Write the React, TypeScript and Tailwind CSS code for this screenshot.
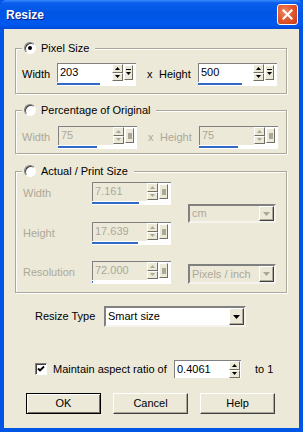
import React from "react";

function UpDown({ disabled }: { disabled?: boolean }) {
  const c = disabled ? "#ACA899" : "#000";
  return (
    <div className="flex flex-col w-[11px] h-[17px]">
      <div className="flex-1 flex items-center justify-center bg-[#ECE9D8] border border-t-white border-l-white border-b-[#716F64] border-r-[#716F64]">
        <svg width="5" height="3" viewBox="0 0 5 3"><path d="M2.5 0L5 3H0z" fill={c} /></svg>
      </div>
      <div className="flex-1 flex items-center justify-center bg-[#ECE9D8] border border-t-white border-l-white border-b-[#716F64] border-r-[#716F64]">
        <svg width="5" height="3" viewBox="0 0 5 3"><path d="M0 0H5L2.5 3z" fill={c} /></svg>
      </div>
    </div>
  );
}

function DropBtn({ disabled }: { disabled?: boolean }) {
  return (
    <div className="w-[9px] h-[15px] mt-[1px] ml-[1px] flex items-center justify-center bg-[#ECE9D8] border border-t-white border-l-white border-b-[#716F64] border-r-[#716F64]">
      {disabled ? (
        <div className="w-[4px] h-[6px] bg-[#ACA899]" />
      ) : (
        <svg width="5" height="7" viewBox="0 0 5 7">
          <rect x="0" y="0" width="5" height="1" fill="#000" />
          <path d="M0 3H5L2.5 6z" fill="#000" />
        </svg>
      )}
    </div>
  );
}

function SpinField({
  value,
  w,
  bar,
  disabled,
}: {
  value: string;
  w: number;
  bar: number;
  disabled?: boolean;
}) {
  return (
    <div className="flex flex-col h-[23px] bg-white shrink-0" style={{ width: w }}>
      <div className="flex h-[19px] border-t border-l border-[#808080] pr-[3px]">
        <div
          className={
            "flex-1 h-[18px] pl-[2px] leading-[17px] text-[11px] " +
            (disabled ? "text-[#ACA899] bg-[#ECE9D8]" : "text-black bg-white")
          }
        >
          {value}
        </div>
        <UpDown disabled={disabled} />
        <DropBtn disabled={disabled} />
      </div>
      <div className="h-[4px] pt-[1px]">
        <div className="h-[2px] bg-[#3169C6]" style={{ width: bar }} />
      </div>
    </div>
  );
}

function Radio({ checked }: { checked?: boolean }) {
  return (
    <div className="w-[12px] h-[12px] rounded-full border border-t-[#808080] border-l-[#808080] border-b-white border-r-white bg-white flex items-center justify-center shadow-[inset_1px_1px_0_#404040]">
      {checked && <div className="w-[4px] h-[4px] rounded-full bg-black" />}
    </div>
  );
}

function Group({
  title,
  checked,
  disabled,
  children,
  className,
}: {
  title: string;
  checked?: boolean;
  disabled?: boolean;
  children: React.ReactNode;
  className?: string;
}) {
  return (
    <fieldset
      className={
        "ml-[11px] w-[272px] border border-[#ACA899] shadow-[inset_1px_1px_0_#fff,1px_1px_0_#fff] " +
        (className ?? "")
      }
    >
      <legend className="ml-[6px] pl-[2px] pr-[6px] h-[14px] flex items-center bg-[#ECE9D8]">
        <Radio checked={checked} />
        <span className="ml-[5px] text-[11px] leading-[14px] text-black">{title}</span>
      </legend>
      <div className={disabled ? "text-[#ACA899]" : "text-black"}>{children}</div>
    </fieldset>
  );
}

function Select({ value, w, h, disabled }: { value: string; w: number; h: number; disabled?: boolean }) {
  return (
    <div
      className={
        "flex border-2 border-t-[#808080] border-l-[#808080] border-b-[#F4F3EE] border-r-[#F4F3EE] " +
        (disabled ? "bg-[#ECE9D8]" : "bg-white")
      }
      style={{ width: w, height: h }}
    >
      <div className={"flex-1 pl-[2px] text-[11px] flex items-center " + (disabled ? "text-[#ACA899]" : "text-black")}>
        {value}
      </div>
      <div className="w-[15px] h-full flex items-center justify-center bg-[#ECE9D8] border border-t-white border-l-white border-b-[#404040] border-r-[#404040] shadow-[inset_-1px_-1px_0_#ACA899]">
        <svg width="7" height="4" viewBox="0 0 7 4">
          <path d="M0 0H7L3.5 4z" fill={disabled ? "#ACA899" : "#000"} />
        </svg>
      </div>
    </div>
  );
}

function Button({ label, def }: { label: string; def?: boolean }) {
  return (
    <div
      className={
        "w-[75px] h-[21px] flex items-center justify-center text-[11px] text-black bg-[#ECE9D8] " +
        (def
          ? "border border-black shadow-[inset_1px_1px_0_#fff,inset_-1px_-1px_0_#716F64]"
          : "border border-t-white border-l-white border-b-[#404040] border-r-[#404040] shadow-[inset_-1px_-1px_0_#ACA899]")
      }
    >
      {label}
    </div>
  );
}

export default function App() {
  return (
    <div
      className="w-[303px] h-[432px] flex flex-col bg-[#0055E5] overflow-hidden"
      style={{ fontFamily: '"Liberation Sans", Arial, sans-serif' }}
    >
      {/* title bar */}
      <div className="h-[29px] flex items-center bg-[linear-gradient(180deg,#3A8CFF_0%,#0A5EEE_10%,#0055E5_45%,#0058EE_85%,#0049D8_100%)] rounded-t-[6px]">
        <span className="ml-[6px] text-white font-bold text-[12px] [text-shadow:1px_1px_0_#0A1E8C]">Resize</span>
        <div className="ml-auto mr-[5px] w-[21px] h-[21px] rounded-[3px] border border-white bg-[radial-gradient(circle_at_35%_35%,#F08A66_0%,#E25A2E_45%,#C5381A_100%)] flex items-center justify-center">
          <svg width="11" height="11" viewBox="0 0 11 11">
            <path d="M1.5 1.5L9.5 9.5M9.5 1.5L1.5 9.5" stroke="#fff" strokeWidth="2.2" strokeLinecap="square" />
          </svg>
        </div>
      </div>

      {/* client */}
      <div className="flex-1 mx-[4px] mb-[4px] bg-[#ECE9D8] flex flex-col text-[11px]">
        <Group title="Pixel Size" checked className="mt-[12px]">
          <div className="flex items-center pl-[6px] mt-[8px] mb-[7px]">
            <span className="w-[35px]">Width</span>
            <SpinField value="203" w={79} bar={43} />
            <span className="ml-[11px] w-[12px]">x</span>
            <span className="w-[39px]">Height</span>
            <SpinField value="500" w={79} bar={44} />
          </div>
        </Group>

        <Group title="Percentage of Original" disabled className="mt-[9px]">
          <div className="flex items-center pl-[6px] mt-[9px] mb-[4px]">
            <span className="w-[36px]">Width</span>
            <SpinField value="75" w={79} bar={39} disabled />
            <span className="ml-[11px] w-[12px]">x</span>
            <span className="w-[39px]">Height</span>
            <SpinField value="75" w={79} bar={39} disabled />
          </div>
        </Group>

        <Group title="Actual / Print Size" disabled className="mt-[10px]">
          <div className="flex pl-[7px] pb-[8px]">
            <div className="flex flex-col">
              <div className="flex items-center mt-[4px]">
                <span className="w-[69px]">Width</span>
                <SpinField value="7.161" w={79} bar={47} disabled />
              </div>
              <div className="flex items-center mt-[17px]">
                <span className="w-[69px]">Height</span>
                <SpinField value="17.639" w={79} bar={46} disabled />
              </div>
              <div className="flex items-center mt-[16px]">
                <span className="w-[69px]">Resolution</span>
                <SpinField value="72.000" w={79} bar={1} disabled />
              </div>
            </div>
            <div className="flex flex-col ml-[17px]">
              <div className="mt-[26px]">
                <Select value="cm" w={88} h={19} disabled />
              </div>
              <div className="mt-[41px]">
                <Select value="Pixels / inch" w={88} h={20} disabled />
              </div>
            </div>
          </div>
        </Group>

        <div className="flex items-center mt-[13px] ml-[31px]">
          <span className="w-[69px] text-black">Resize Type</span>
          <Select value="Smart size" w={142} h={21} />
        </div>

        <div className="flex items-center mt-[33px] ml-[31px] text-black">
          <div className="w-[12px] h-[12px] bg-white border border-t-[#808080] border-l-[#808080] border-b-white border-r-white shadow-[inset_1px_1px_0_#404040] flex items-center justify-center">
            <svg width="8" height="8" viewBox="0 0 8 8">
              <path d="M1 3.5L3 5.5L7 1.5" stroke="#000" strokeWidth="1.8" fill="none" />
            </svg>
          </div>
          <span className="ml-[6px] w-[121px]">Maintain aspect ratio of</span>
          <div className="w-[67px] h-[18px] flex bg-white border-t border-l border-[#808080] pr-[1px]">
            <div className="flex-1 pl-[2px] leading-[16px]">0.4061</div>
            <UpDown />
          </div>
          <span className="ml-[14px]">to 1</span>
        </div>

        <div className="flex mt-[15px] ml-[22px] gap-[12px]">
          <Button label="OK" def />
          <Button label="Cancel" />
          <Button label="Help" />
        </div>
      </div>
    </div>
  );
}
